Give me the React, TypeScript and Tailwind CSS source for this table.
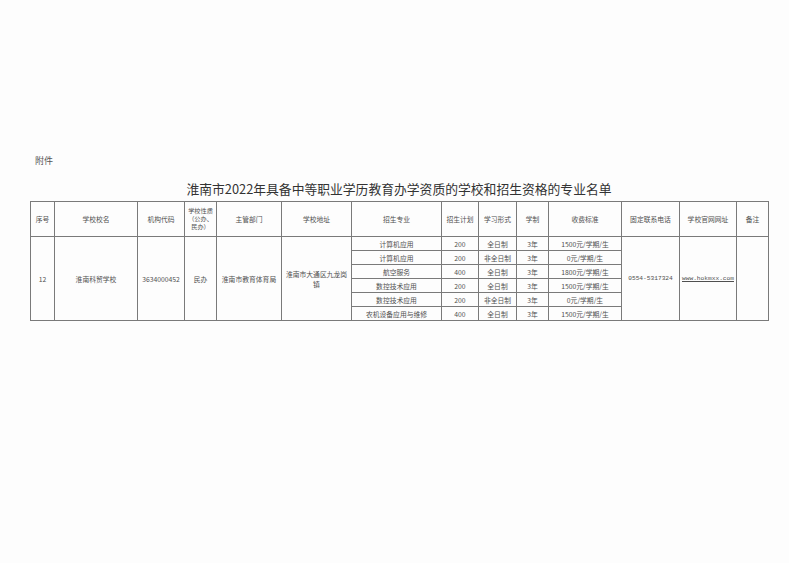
const font = { fontFamily: '"Noto Sans CJK SC", "Noto Sans", sans-serif' }

const headers = [
  '序号',
  '学校校名',
  '机构代码',
  '学校性质（公办、民办）',
  '主管部门',
  '学校地址',
  '招生专业',
  '招生计划',
  '学习形式',
  '学制',
  '收费标准',
  '固定联系电话',
  '学校官网网址',
  '备注',
]

const widths = [24, 83, 47, 32, 65, 70, 90, 37, 38, 32, 73, 58, 57, 32]

const majors = [
  { name: '计算机应用', plan: '200', form: '全日制', years: '3年', fee: '1500元/学期/生' },
  { name: '计算机应用', plan: '200', form: '非全日制', years: '3年', fee: '0元/学期/生' },
  { name: '航空服务', plan: '400', form: '全日制', years: '3年', fee: '1800元/学期/生' },
  { name: '数控技术应用', plan: '200', form: '全日制', years: '3年', fee: '1500元/学期/生' },
  { name: '数控技术应用', plan: '200', form: '非全日制', years: '3年', fee: '0元/学期/生' },
  { name: '农机设备应用与维修', plan: '400', form: '全日制', years: '3年', fee: '1500元/学期/生' },
]

const base = 'border border-[#7a7a7a] p-0 text-center align-middle overflow-hidden'
const cell = `${base} whitespace-nowrap`
const mono = { fontFamily: '"Liberation Mono", monospace' }

export default function App() {
  return (
    <div className="w-[789px] h-[563px] bg-[#fdfdfd] text-[#505050] overflow-hidden" style={font}>
      <div className="pt-[155px] pl-[35px] text-[9px] leading-[11px] text-[#555]">附件</div>

      <div className="mt-[15px] w-[738px] ml-[30px] text-center text-[12.8px] leading-[16px] text-[#333]">
        淮南市2022年具备中等职业学历教育办学资质的学校和招生资格的专业名单
      </div>

      <table className="mt-[4px] ml-[30px] w-[738px] table-fixed border-collapse border-[1.5px] border-[#6a6a6a] text-[6.8px] leading-[8px]">
        <colgroup>
          {widths.map((w, i) => (
            <col key={i} style={{ width: w }} />
          ))}
        </colgroup>
        <thead>
          <tr className="h-[35px]">
            {headers.map((h, i) => (
              <th key={i} className={`${cell} font-normal`}>
                {i === 3 ? (
                  <div className="text-[6.2px] leading-[8px]">
                    学校性质
                    <br />
                    （公办、
                    <br />
                    民办）
                  </div>
                ) : (
                  h
                )}
              </th>
            ))}
          </tr>
        </thead>
        <tbody>
          {majors.map((m, i) => (
            <tr key={i} className="h-[14px]">
              {i === 0 && (
                <>
                  <td rowSpan={6} className={cell}>12</td>
                  <td rowSpan={6} className={cell}>淮南科贸学校</td>
                  <td rowSpan={6} className={cell}>3634000452</td>
                  <td rowSpan={6} className={cell}>民办</td>
                  <td rowSpan={6} className={cell}>淮南市教育体育局</td>
                  <td rowSpan={6} className={`${base} px-[3px] leading-[10px]`}>
                    淮南市大通区九龙岗镇
                  </td>
                </>
              )}
              <td className={cell}>{m.name}</td>
              <td className={cell}>{m.plan}</td>
              <td className={cell}>{m.form}</td>
              <td className={cell}>{m.years}</td>
              <td className={cell}>{m.fee}</td>
              {i === 0 && (
                <>
                  <td rowSpan={6} className={`${cell} text-[6.2px]`} style={mono}>
                    0554-5317324
                  </td>
                  <td rowSpan={6} className={`${cell} text-[6.2px]`} style={mono}>
                    <span className="underline">www.hokmxx.com</span>
                  </td>
                  <td rowSpan={6} className={cell}></td>
                </>
              )}
            </tr>
          ))}
        </tbody>
      </table>
    </div>
  )
}
